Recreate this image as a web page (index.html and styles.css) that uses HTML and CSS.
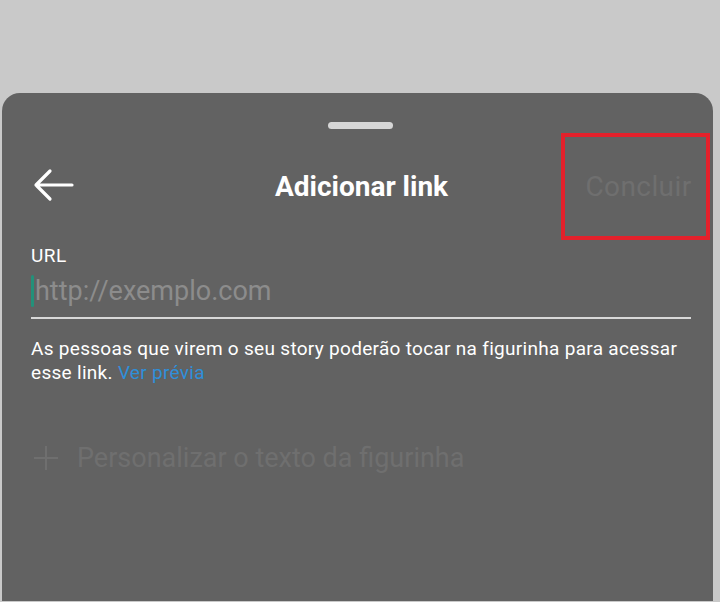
FILE: index.html
```html
<!DOCTYPE html>
<html lang="pt">
<head>
    <meta charset="UTF-8">
    <meta name="viewport" content="width=device-width, initial-scale=1.0">
    <title>Adicionar link</title>
    <link rel="stylesheet" href="styles.css">
</head>
<body>

    <!-- Bottom sheet for adding a link sticker -->
    <div class="sheet">
        <div class="sheet-handle"></div>

        <div class="sheet-header">
            <button class="back-button" aria-label="Voltar">
                <svg width="42" height="34" viewBox="0 0 42 34">
                    <path d="M40 17 H4 M18 3 L4 17 L18 31" fill="none" stroke="#ffffff" stroke-width="3.2" stroke-linecap="round" stroke-linejoin="round"/>
                </svg>
            </button>
            <h1 class="sheet-title">Adicionar link</h1>
            <div class="done-wrap">
                <span class="done-button">Concluir</span>
            </div>
        </div>

        <div class="sheet-body">
            <label for="url" class="field-label">URL</label>
            <div class="field">
                <span class="caret"></span>
                <input type="text" id="url" class="field-input" placeholder="http://exemplo.com">
            </div>

            <p class="helper-text">
                As pessoas que virem o seu story poderão tocar na figurinha para acessar
                esse link. <a href="#" class="preview-link">Ver prévia</a>
            </p>

            <div class="custom-text">
                <svg width="26" height="26" viewBox="0 0 26 26">
                    <path d="M13 1 V25 M1 13 H25" fill="none" stroke="#6f6f6f" stroke-width="2"/>
                </svg>
                <span>Personalizar o texto da figurinha</span>
            </div>
        </div>
    </div>

</body>
</html>
```

FILE: styles.css
```css
html,
body {
    height: 100%;
}

body {
    margin: 0;
    background-color: #c9c9c9;
    font-family: Roboto, "Liberation Sans", sans-serif;
    overflow: hidden;
}

.sheet {
    box-sizing: border-box;
    height: 508px;
    margin: 93px 7px 0 2px;
    padding-top: 29px;
    border-radius: 18px 18px 0 0;
    background-color: #626262;
}

.sheet-handle {
    width: 65px;
    height: 7px;
    margin-left: 326px;
    border-radius: 4px;
    background-color: #d6d6d6;
}

.sheet-header {
    display: grid;
    grid-template-columns: 1fr auto 1fr;
    align-items: center;
    margin-top: 4px;
}

.back-button {
    justify-self: start;
    display: flex;
    margin: 0 0 4px 30px;
    padding: 0;
    border: none;
    background: none;
    cursor: pointer;
}

.sheet-title {
    margin: 0 0 0 8px;
    color: #ffffff;
    font-size: 28px;
    font-weight: 700;
}

.done-wrap {
    justify-self: end;
    margin-right: 3px;
}

.done-button {
    display: flex;
    align-items: center;
    justify-content: center;
    box-sizing: border-box;
    width: 149px;
    height: 107px;
    padding-left: 6px;
    border: 4px solid #e3212b;
    color: #6f6f6f;
    font-size: 28px;
    letter-spacing: 0.4px;
}

.sheet-body {
    padding: 6px 22px 0 29px;
}

.field-label {
    display: block;
    color: #ffffff;
    font-size: 19px;
    line-height: 20px;
    letter-spacing: 0.5px;
}

.field {
    display: flex;
    align-items: center;
    margin-top: 9px;
    padding-bottom: 10px;
    border-bottom: 2px solid #d8d8d8;
}

.caret {
    width: 3px;
    height: 32px;
    border-radius: 2px;
    background-color: #23917a;
}

.field-input {
    flex: 1;
    margin: 0;
    padding: 0 0 0 1px;
    border: none;
    outline: none;
    background: none;
    color: #ffffff;
    font-family: inherit;
    font-size: 27px;
}

.field-input::placeholder {
    color: #8c8c8c;
}

.helper-text {
    margin: 18px 0 0;
    color: #ffffff;
    font-size: 19px;
    line-height: 24px;
    letter-spacing: 0.3px;
}

.preview-link {
    color: #2f8fd9;
    text-decoration: none;
}

.custom-text {
    display: flex;
    align-items: center;
    gap: 18px;
    margin-top: 57px;
    padding-left: 2px;
    color: #6f6f6f;
    font-size: 27px;
}
```
